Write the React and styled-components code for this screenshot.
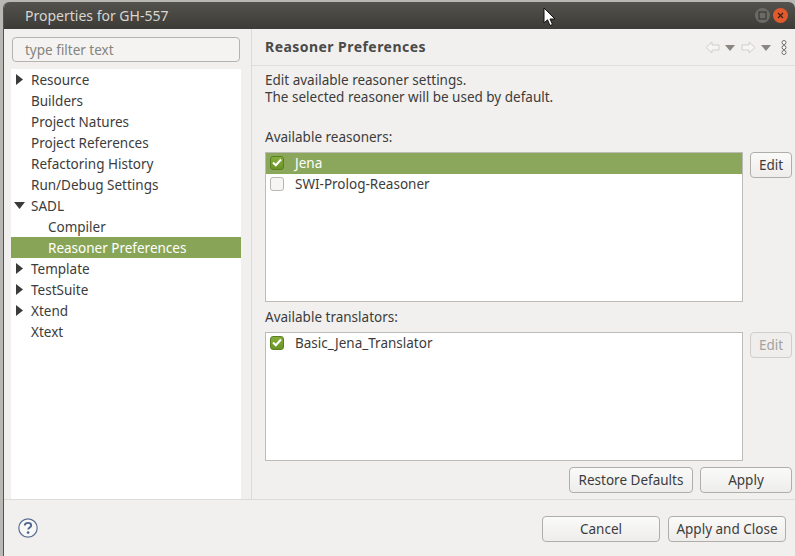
import React from "react";
import styled, { createGlobalStyle } from "styled-components";

const Global = createGlobalStyle`
  html, body { margin: 0; padding: 0; background: #b9b8b5; overflow: hidden; }
  body { font-family: "Noto Sans", "Open Sans", sans-serif; font-size: 13.5px; color: #3c3c3c; }
`;

const Page = styled.div`
  position: relative;
  width: 795px;
  height: 556px;
  padding: 2px 0 0 3px;
  box-sizing: border-box;
`;
const Window = styled.div`
  width: 792px;
  height: 554px;
  display: flex;
  flex-direction: column;
  background: #f1f0ee;
  border-left: 1px solid #55544f;
  box-sizing: border-box;
  border-radius: 6px 6px 0 0;
  overflow: hidden;
`;
const TitleBar = styled.div`
  height: 27px;
  flex: none;
  display: flex;
  align-items: center;
  justify-content: space-between;
  padding: 0 7px 0 21px;
  background: linear-gradient(#53524c, #3c3b37);
`;
const Title = styled.div`
  color: #d8d6cf;
  font-size: 14px;
  line-height: 1;
`;
const WinControls = styled.div`
  display: flex;
  gap: 3px;
`;
const WinButton = styled.div`
  width: 15px;
  height: 15px;
  border-radius: 50%;
  display: flex;
  align-items: center;
  justify-content: center;
  background: ${(p) => (p.$close ? "#e2592c" : "#6b6a65")};
`;
const Main = styled.div`
  flex: 1;
  min-height: 0;
  display: flex;
`;
const Sidebar = styled.div`
  width: 248px;
  flex: none;
  box-sizing: border-box;
  border-right: 1px solid #dcdbd8;
  padding: 8px 10px 0 7px;
  display: flex;
  flex-direction: column;
`;
const Filter = styled.input`
  height: 25px;
  width: 228px;
  margin-left: 1px;
  box-sizing: border-box;
  border: 1px solid #b5b3ae;
  border-radius: 4px;
  padding: 0 12px;
  font: 13.5px "Noto Sans", sans-serif;
  background: #f4f3f1;
  &::placeholder { color: #85847f; opacity: 1; }
`;
const Tree = styled.div`
  flex: 1;
  margin-top: 7px;
  background: #fff;
`;
const TreeRow = styled.div`
  height: 21px;
  display: flex;
  align-items: center;
  padding-left: ${(p) => (p.$child ? 37 : 20)}px;
  position: relative;
  white-space: nowrap;
  color: ${(p) => (p.$selected ? "#fff" : "#3c3c3c")};
  background: ${(p) => (p.$selected ? "#88a557" : "transparent")};
`;
const Twisty = styled.svg`
  position: absolute;
  left: ${(p) => (p.$open ? 3 : 5)}px;
  top: ${(p) => (p.$open ? 7 : 5)}px;
  fill: #3a3a3a;
`;
const Content = styled.div`
  flex: 1;
  min-width: 0;
  display: flex;
  flex-direction: column;
`;
const Header = styled.div`
  height: 37px;
  flex: none;
  box-sizing: border-box;
  border-bottom: 1px solid #dfdedb;
  display: flex;
  align-items: center;
  justify-content: space-between;
  padding: 0 8px 2px 13px;
`;
const HeaderTitle = styled.div`
  font-size: 14px;
  font-weight: 700;
  letter-spacing: 0.45px;
  color: #4a4a48;
`;
const HeaderTools = styled.div`
  display: flex;
  align-items: center;
  margin-top: 3px;
`;
const Body = styled.div`
  flex: 1;
  min-height: 0;
  display: flex;
  flex-direction: column;
  padding: 6px 3px 6px 13px;
`;
const Description = styled.div`
  line-height: 17px;
  margin-bottom: 23px;
`;
const SectionLabel = styled.div`
  line-height: 17px;
  margin-bottom: 6px;
`;
const ListRow = styled.div`
  display: flex;
  gap: 7px;
  align-items: flex-start;
  margin-bottom: ${(p) => p.$gap}px;
`;
const ListBox = styled.div`
  width: 478px;
  height: ${(p) => p.$h}px;
  box-sizing: border-box;
  border: 1px solid #bdbbb7;
  background: #fff;
`;
const Item = styled.div`
  height: 21px;
  box-sizing: border-box;
  padding: 0 0 2px 4px;
  display: flex;
  align-items: center;
  gap: 11px;
  color: ${(p) => (p.$selected ? "#fff" : "#3c3c3c")};
  background: ${(p) => (p.$selected ? "#8ba75c" : "transparent")};
`;
const Check = styled.span`
  width: 14px;
  height: 14px;
  flex: none;
  border-radius: 3px;
  display: flex;
  align-items: center;
  justify-content: center;
  box-sizing: border-box;
  border: 1px solid ${(p) => (p.$on ? "#5b7f20" : "#b9b7b2")};
  background: ${(p) => (p.$on ? "linear-gradient(#85ad3c, #6a9425)" : "#f6f5f3")};
`;
const Button = styled.button`
  width: ${(p) => p.$w}px;
  height: 26px;
  flex: none;
  padding: 0;
  box-sizing: border-box;
  border: 1px solid ${(p) => (p.disabled ? "#cfcecb" : "#b0aea9")};
  border-radius: 4px;
  background: ${(p) => (p.disabled ? "#efeeec" : "linear-gradient(#fafaf9, #eeedeb)")};
  color: ${(p) => (p.disabled ? "#a3a29e" : "#3c3c3c")};
  font: 13.5px "Noto Sans", sans-serif;
`;
const RestoreRow = styled.div`
  display: flex;
  justify-content: flex-end;
  gap: 7px;
`;
const Footer = styled.div`
  height: 57px;
  flex: none;
  box-sizing: border-box;
  border-top: 1px solid #dcdbd8;
  display: flex;
  align-items: flex-start;
  justify-content: space-between;
  padding: 16px 9px 0 14px;
`;
const FooterButtons = styled.div`
  display: flex;
  gap: 8px;
`;
const HelpIcon = styled.svg`
  margin-top: 2px;
`;
const Cursor = styled.svg`
  position: absolute;
  left: 543px;
  top: 7px;
`;
const CaretIcon = styled.svg`
  margin: 1px 6px 0 5px;
`;
const DotsIcon = styled.svg`
  margin-left: 4px;
`;

const tree = [
  { t: "Resource", k: "closed" },
  { t: "Builders" },
  { t: "Project Natures" },
  { t: "Project References" },
  { t: "Refactoring History" },
  { t: "Run/Debug Settings" },
  { t: "SADL", k: "open" },
  { t: "Compiler", child: true },
  { t: "Reasoner Preferences", child: true, selected: true },
  { t: "Template", k: "closed" },
  { t: "TestSuite", k: "closed" },
  { t: "Xtend", k: "closed" },
  { t: "Xtext" },
];

const CheckMark = () => (
  <svg width="10" height="9" viewBox="0 0 10 9">
    <path d="M1 4.5 L3.8 7.2 L9 1.5" fill="none" stroke="#fff" strokeWidth="2" />
  </svg>
);

const NavArrow = ({ dir }) => (
  <svg width="15" height="13" viewBox="0 0 15 13">
    <path
      d={dir === "left" ? "M1 6.5 L7 1 V4 H14 V9 H7 V12 Z" : "M14 6.5 L8 1 V4 H1 V9 H8 V12 Z"}
      fill="#f6f5f3"
      stroke="#d0cfcb"
    />
  </svg>
);

const Caret = () => (
  <CaretIcon width="10" height="6" viewBox="0 0 10 6">
    <path d="M0 0 H10 L5 6 Z" fill="#8a8580" />
  </CaretIcon>
);

const Dots = () => (
  <DotsIcon width="6" height="15" viewBox="0 0 6 15">
    <circle cx="3" cy="2.5" r="2" fill="#fff" stroke="#6b6b68" />
    <circle cx="3" cy="7.5" r="2" fill="#fff" stroke="#6b6b68" />
    <circle cx="3" cy="12.5" r="2" fill="#fff" stroke="#6b6b68" />
  </DotsIcon>
);

export default function App() {
  return (
    <Page>
      <Global />
      <Window>
        <TitleBar>
          <Title>Properties for GH-557</Title>
          <WinControls>
            <WinButton>
              <svg width="9" height="9" viewBox="0 0 9 9">
                <rect x="1" y="1" width="7" height="7" fill="none" stroke="#2f2f2c" />
              </svg>
            </WinButton>
            <WinButton $close>
              <svg width="7" height="7" viewBox="0 0 7 7">
                <path d="M1 1 L6 6 M6 1 L1 6" stroke="#3a2018" strokeWidth="1.2" />
              </svg>
            </WinButton>
          </WinControls>
        </TitleBar>
        <Main>
          <Sidebar>
            <Filter placeholder="type filter text" />
            <Tree>
              {tree.map((n) => (
                <TreeRow key={n.t} $child={n.child} $selected={n.selected}>
                  {n.k === "closed" && (
                    <Twisty width="7" height="11" viewBox="0 0 7 11">
                      <path d="M0 0 L7 5.5 L0 11 Z" />
                    </Twisty>
                  )}
                  {n.k === "open" && (
                    <Twisty $open width="11" height="7" viewBox="0 0 11 7">
                      <path d="M0 0 H11 L5.5 7 Z" />
                    </Twisty>
                  )}
                  {n.t}
                </TreeRow>
              ))}
            </Tree>
          </Sidebar>
          <Content>
            <Header>
              <HeaderTitle>Reasoner Preferences</HeaderTitle>
              <HeaderTools>
                <NavArrow dir="left" />
                <Caret />
                <NavArrow dir="right" />
                <Caret />
                <Dots />
              </HeaderTools>
            </Header>
            <Body>
              <Description>
                Edit available reasoner settings.
                <br />
                The selected reasoner will be used by default.
              </Description>
              <SectionLabel>Available reasoners:</SectionLabel>
              <ListRow $gap={7}>
                <ListBox $h={150}>
                  <Item $selected>
                    <Check $on>
                      <CheckMark />
                    </Check>
                    Jena
                  </Item>
                  <Item>
                    <Check />
                    SWI-Prolog-Reasoner
                  </Item>
                </ListBox>
                <Button $w={42}>Edit</Button>
              </ListRow>
              <SectionLabel>Available translators:</SectionLabel>
              <ListRow $gap={6}>
                <ListBox $h={129}>
                  <Item>
                    <Check $on>
                      <CheckMark />
                    </Check>
                    Basic_Jena_Translator
                  </Item>
                </ListBox>
                <Button $w={42} disabled>
                  Edit
                </Button>
              </ListRow>
              <RestoreRow>
                <Button $w={124}>Restore Defaults</Button>
                <Button $w={92}>Apply</Button>
              </RestoreRow>
            </Body>
          </Content>
        </Main>
        <Footer>
          <HelpIcon width="20" height="20" viewBox="0 0 20 20">
            <circle cx="10" cy="10" r="9.2" fill="#f8f8f7" stroke="#5a7097" strokeWidth="1.2" />
            <path
              d="M6.8 7.6 C6.8 5.6 8.4 4.9 10 4.9 C11.8 4.9 13.2 5.8 13.2 7.4 C13.2 9.4 10.2 9.6 10.2 11.6"
              fill="none"
              stroke="#4e6690"
              strokeWidth="1.9"
            />
            <circle cx="10.1" cy="14.6" r="1.3" fill="#4e6690" />
          </HelpIcon>
          <FooterButtons>
            <Button $w={118}>Cancel</Button>
            <Button $w={118}>Apply and Close</Button>
          </FooterButtons>
        </Footer>
      </Window>
      <Cursor width="14" height="20" viewBox="0 0 14 20">
        <path d="M1 1 V16 L4.5 12.8 L7 18.5 L9.5 17.4 L7 12 H12 Z" fill="#fff" stroke="#111" strokeWidth="1" />
      </Cursor>
    </Page>
  );
}
